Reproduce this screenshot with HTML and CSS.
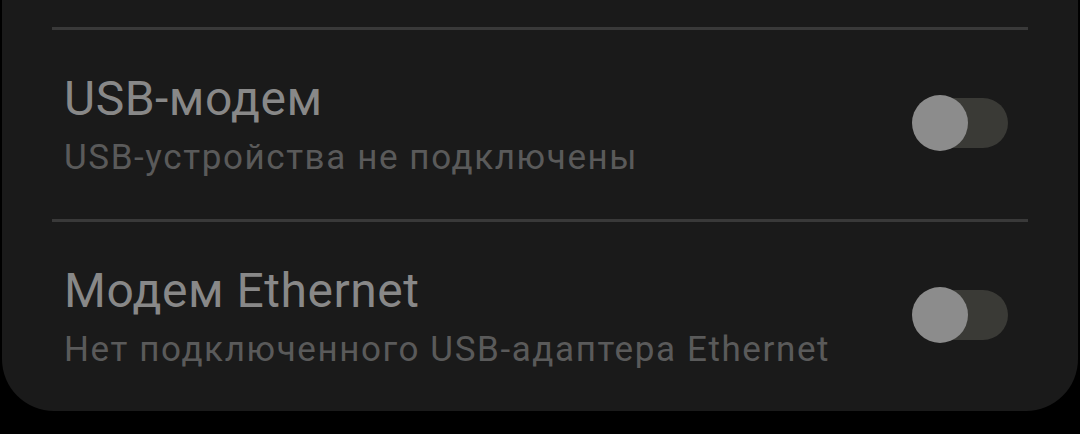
FILE: index.html
```html
<!DOCTYPE html>
<html lang="ru">
<head>
  <meta charset="UTF-8">
  <meta name="viewport" content="width=device-width, initial-scale=1.0">
  <title>Модем</title>
<link rel="stylesheet" href="styles.css">
</head>
<body>
  <div class="card">
    <div class="divider"></div>
    <div class="row">
      <div class="text">
        <div class="title">USB-модем</div>
        <div class="summary">USB-устройства не подключены</div>
      </div>
      <div class="switch">
        <div class="track"></div>
        <div class="knob"></div>
      </div>
    </div>
    <div class="divider"></div>
    <div class="row">
      <div class="text">
        <div class="title">Модем Ethernet</div>
        <div class="summary">Нет подключенного USB-адаптера Ethernet</div>
      </div>
      <div class="switch">
        <div class="track"></div>
        <div class="knob"></div>
      </div>
    </div>
  </div>
</body>
</html>
```
FILE: styles.css
```css
body {
  margin: 0;
  padding: 0;
  background-color: #000;
  font-family: Roboto, "Noto Sans", sans-serif;
}

.card {
  margin: 0 2px;
  height: 411px;
  padding: 27px 50px 0 50px;
  box-sizing: border-box;
  background-color: #1a1a1a;
  border-radius: 0 0 52px 52px;
}

.divider {
  height: 3px;
  background-color: #393939;
}

.row {
  display: flex;
  align-items: center;
  justify-content: space-between;
  height: 189px;
  padding: 0 20px 0 12px;
}

.title {
  font-size: 48px;
  line-height: 56px;
  letter-spacing: 0.5px;
  color: #888;
}

.summary {
  margin-top: 10px;
  font-size: 35px;
  line-height: 42px;
  letter-spacing: 1.6px;
  color: #5a5a5a;
}

.switch {
  position: relative;
  width: 96px;
  height: 56px;
  margin-top: -3px;
}

.track {
  position: absolute;
  top: 3px;
  left: 4px;
  right: 0;
  height: 50px;
  border-radius: 25px;
  background-color: #3a3a36;
}

.knob {
  position: absolute;
  top: 0;
  left: 0;
  width: 56px;
  height: 56px;
  border-radius: 50%;
  background-color: #8c8c8c;
}
```
